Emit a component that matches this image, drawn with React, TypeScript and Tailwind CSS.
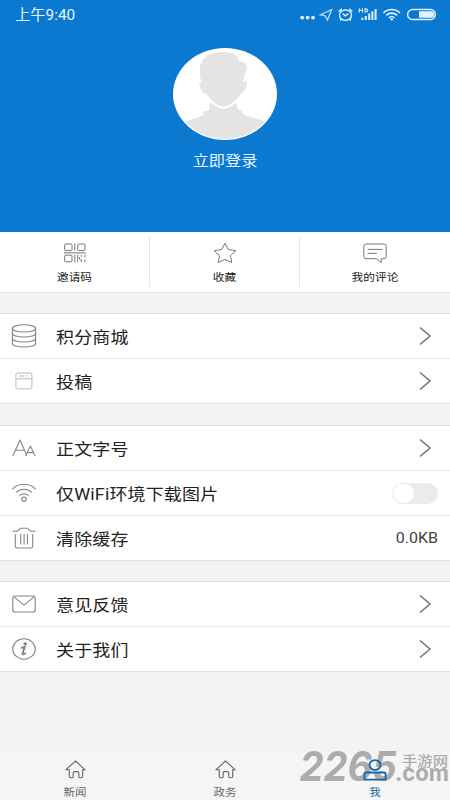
import React, { useState } from 'react';

type IconProps = { className?: string };

const QrIcon: React.FC<IconProps> = ({ className }) => (
  <svg viewBox="0 0 22 20" className={className} fill="none" stroke="currentColor">
    <rect x="0.7" y="1" width="7.3" height="6.6" rx="0.8" />
    <rect x="13.7" y="1" width="7.3" height="6.6" rx="0.8" />
    <rect x="0.7" y="12.2" width="7.3" height="6.6" rx="0.8" />
    <path d="M10.8 0.5v7.2M0 9.9h22M10.8 11.8v7.5M13.7 11.8v7.5M17.3 11.8v2M17.3 16v3.3M15.6 14v2.4M21 11.8v2.8M21 16.4v2.9" />
  </svg>
);

const StarIcon: React.FC<IconProps> = ({ className }) => (
  <svg viewBox="0 0 24 22" className={className} fill="none" stroke="currentColor" strokeLinejoin="round">
    <path d="M12 1.2l3.3 6.4 7.5 1.1-5.4 4.9 1.4 7-6.8-3.2-6.8 3.2 1.4-7-5.4-4.9 7.5-1.1z" />
  </svg>
);

const CommentIcon: React.FC<IconProps> = ({ className }) => (
  <svg viewBox="0 0 24 21" className={className} fill="none" stroke="currentColor" strokeLinejoin="round">
    <path d="M3 1h18a2.2 2.2 0 0 1 2.2 2.2v10.3a2.2 2.2 0 0 1-2.2 2.2h-2.8v4l-4.5-4H3a2.2 2.2 0 0 1-2.2-2.2V3.2A2.2 2.2 0 0 1 3 1zM4.6 6.4h15M4.6 10.4h9.2" />
  </svg>
);

const CoinsIcon: React.FC<IconProps> = ({ className }) => (
  <svg viewBox="0 0 26 24" className={className} fill="none" stroke="currentColor" strokeWidth="1.1">
    <ellipse cx="13" cy="4.4" rx="11.6" ry="3.6" />
    <path d="M1.4 4.4v15c0 2 5.2 3.6 11.6 3.6s11.6-1.6 11.6-3.6v-15M1.4 9.4c0 2 5.2 3.6 11.6 3.6s11.6-1.6 11.6-3.6M1.4 14.4c0 2 5.2 3.6 11.6 3.6s11.6-1.6 11.6-3.6" />
  </svg>
);

const DraftIcon: React.FC<IconProps> = ({ className }) => (
  <svg viewBox="0 0 18 18" className={className} fill="none" stroke="currentColor">
    <rect x="0.9" y="1" width="16" height="15.8" rx="2" />
    <path d="M1 6.8h16M4 4h5M10 4h1.2M12.6 3.2v1.4" />
  </svg>
);

const FontSizeIcon: React.FC<IconProps> = ({ className }) => (
  <svg viewBox="0 0 24 18" className={className} fill="none" stroke="currentColor" strokeWidth="1.1" strokeLinejoin="round">
    <path d="M0.8 17L8 1l6.8 15.6M3.4 11.2h9M13.6 17l4.8-10 4.7 10M15.3 13.6h6.2" />
  </svg>
);

const WifiIcon: React.FC<IconProps> = ({ className }) => (
  <svg viewBox="0 0 24 20" className={className} fill="none" stroke="currentColor" strokeWidth="1.1" strokeLinecap="round">
    <path d="M0.8 5.8c6-6 16.4-6 22.4 0M4.4 9.2c4.2-4 11-4 15.2 0M8 12.4c2.2-2.1 5.8-2.1 8 0" />
    <circle cx="12" cy="16.2" r="2.2" />
  </svg>
);

const TrashIcon: React.FC<IconProps> = ({ className }) => (
  <svg viewBox="0 0 24 22" className={className} fill="none" stroke="currentColor" strokeWidth="1.1" strokeLinejoin="round">
    <path d="M0.5 4.2h5l3-3h7l3 3h5M3.3 7v12.2a1.8 1.8 0 0 0 1.8 1.8h13.8a1.8 1.8 0 0 0 1.8-1.8V7M8.7 7v10.5M12.1 7v10.5M15.4 7v10.5" />
  </svg>
);

const MailIcon: React.FC<IconProps> = ({ className }) => (
  <svg viewBox="0 0 24 18" className={className} fill="none" stroke="currentColor" strokeWidth="1.1" strokeLinejoin="round">
    <rect x="0.8" y="1" width="22.4" height="16" rx="2" />
    <path d="M1.8 1.6L12 10.2 22.2 1.6" />
  </svg>
);

const InfoIcon: React.FC<IconProps> = ({ className }) => (
  <svg viewBox="0 0 24 22" className={className} fill="none" stroke="currentColor" strokeWidth="1.1">
    <ellipse cx="12" cy="11" rx="11.3" ry="10.2" />
    <ellipse cx="13.2" cy="5.8" rx="1.8" ry="1.5" fill="currentColor" stroke="none" />
    <path d="M8.8 9.7c1.5 0 2.8-.3 3.9-.8l-2 6.4c-.4 1.6 1 1.5 3.2-.4" strokeWidth="1.9" />
  </svg>
);

const HomeIcon: React.FC<IconProps> = ({ className }) => (
  <svg viewBox="0 0 21 19" className={className} fill="none" stroke="currentColor" strokeWidth="1.1" strokeLinejoin="round">
    <path d="M0.8 9.8L10.5 1l9.7 8.8h-2.5v6.4c0 1-.5 1.6-1.5 1.6h-1c-.9 0-1.4-.5-1.4-1.4v-3.6c0-.8-.5-1.2-1.2-1.2H9.4c-.8 0-1.2.4-1.2 1.2v3.6c0 .9-.5 1.4-1.4 1.4h-1c-1 0-1.5-.6-1.5-1.6V9.8z" />
  </svg>
);

const UserIcon: React.FC<IconProps> = ({ className }) => (
  <svg viewBox="0 0 24 22" className={className} fill="none" stroke="currentColor" strokeWidth="1.8">
    <ellipse cx="12" cy="6" rx="5.5" ry="4.9" />
    <path d="M3 13.5h18a1.6 1.6 0 0 1 1.6 1.6v5.6H1.4v-5.6A1.6 1.6 0 0 1 3 13.5z" />
  </svg>
);

const Chevron: React.FC = () => (
  <svg viewBox="0 0 14 20" className="h-5 w-3.5 text-[#777]" fill="none" stroke="currentColor" strokeWidth="1.6">
    <path d="M2 1.5L12 10 2 18.5" />
  </svg>
);

const StatusIcons: React.FC = () => (
  <svg viewBox="0 0 142 20" className="h-5 w-[142px]" fill="none" stroke="#dff3ff" strokeWidth="1.4">
    <g fill="#dff3ff" stroke="none">
      <circle cx="2.2" cy="12.6" r="1.9" />
      <circle cx="7.6" cy="12.6" r="1.9" />
      <circle cx="13" cy="12.6" r="1.9" />
      <path d="M61.4 15v-2.2h2V15zM64.8 15v-4h2v4zM68.2 15V8.4h2V15zM71.4 15V6.2h2V15zM74.6 15V4h2v11z" />
    </g>
    <path d="M31.6 4.6L20.4 9.7l4.8 1.2 2.3 4.2z" stroke="#a9d6f6" />
    <ellipse cx="45.5" cy="10.2" rx="6" ry="5.2" />
    <path d="M42.7 8.6l2.8 2.2 2.8-2.2M38.7 6.6l3.2-2.7M52.3 6.6l-3.2-2.7M41.4 14.3l-1.3 1.2M49.6 14.3l1.3 1.2" />
    <path d="M59.3 3.4v4M62.5 3.4v4M59.3 5.3h3.2M65 3.9v3h1c2.3 0 2.3-3 0-3z" strokeWidth="1.1" />
    <path d="M83.4 8c4.6-4.6 12-4.6 16.6 0M86.2 10.4c3-3 8-3 11 0M88.9 12.8c1.6-1.5 4-1.5 5.6 0" strokeWidth="1.6" />
    <circle cx="91.7" cy="14.3" r="1.3" fill="#dff3ff" stroke="none" />
    <rect x="107.6" y="4.5" width="27.8" height="10" rx="5" />
    <path d="M119 6.3h12a3.2 3.2 0 0 1 0 6.4h-12z" fill="#dff3ff" stroke="none" />
  </svg>
);

const Avatar: React.FC = () => (
  <svg viewBox="0 0 104 92" className="h-[92px] w-[104px]">
    <defs>
      <clipPath id="avatarClip">
        <ellipse cx="52" cy="46" rx="50.5" ry="44.8" />
      </clipPath>
    </defs>
    <ellipse cx="52" cy="46" rx="52" ry="46" fill="#fff" />
    <g clipPath="url(#avatarClip)" fill="#e4e4e4">
      <path d="M5 76l8-3c6-2 12-3 17.3-6-.5-2 0-3 1-4 3 .5 5.500-1 5-4.300-.6-1.500-.5-2.500.7-3.400h26c1.200.9 1.500 2.500.8 3.700.5 1.500 1.500 2.700 3.200 3 2 .6 3 2 3.300 4.300 6 3 14 4.500 20.700 6.700l8 3v20H5z" />
      <path
        d="M27 33C24 20 26 13 32 8.5 39 2 56 1 63.7 6.3c2.3 1.700 3.300 4 3.300 6.200 5 0 8 2.500 7.800 8.500 0 4.500-3.300 6-3.500 11.500 3-1 4.200 0 3.700 2.500-.7 4-1.500 8-4 9.500-1.500 1-2.500 1.500-4 4.200C63 54 56 59.500 50.300 59.700 44 59.500 37.500 53 33.700 47.500c-1-1-3.500-1-5-2.700-2-3.500-3.400-6.800-3.400-10.800 0-1.200.8-1.500 1.700-1z"
        stroke="#fff"
        strokeWidth="2"
      />
    </g>
  </svg>
);

const Watermark: React.FC = () => (
  <svg viewBox="0 0 150 52" className="absolute right-0 bottom-0.5 h-[52px] w-[150px] overflow-visible" fill="#acacac">
    <text x="-0.5" y="35" fontFamily="Inter" fontStyle="italic" fontWeight="700" fontSize="41" textLength="97" lengthAdjust="spacingAndGlyphs">
      2265
    </text>
    <text x="95" y="35" fontFamily="Inter" fontWeight="700" fontSize="23" textLength="54" lengthAdjust="spacingAndGlyphs">
      .com
    </text>
    <text x="102" y="19.5" fontFamily="Noto Sans CJK SC" fontWeight="500" fontSize="13.5" textLength="46" lengthAdjust="spacingAndGlyphs">
      手游网
    </text>
  </svg>
);

interface RowProps {
  icon: React.ReactNode;
  label: string;
  children?: React.ReactNode;
}

const Row: React.FC<RowProps> = ({ icon, label, children = <Chevron /> }) => (
  <div className="flex h-[45px] items-center pr-[18px] last:h-11">
    <div className="flex w-12 shrink-0 justify-center text-[#858585]">{icon}</div>
    <span className="ml-2 flex-1 scale-y-90 pt-[3px] text-[18px] leading-none tracking-[0.15px] text-[#222]">{label}</span>
    {children}
  </div>
);

const Section: React.FC<{ children: React.ReactNode }> = ({ children }) => (
  <div className="mb-5 divide-y divide-[#e9e9e9] border-y border-[#e0e0e0] bg-white first-of-type:mb-[21px]">{children}</div>
);

const actions = [
  { label: '邀请码', icon: <QrIcon className="h-5 w-[22px]" /> },
  { label: '收藏', icon: <StarIcon className="h-[22px] w-6" /> },
  { label: '我的评论', icon: <CommentIcon className="h-[21px] w-6" /> },
];

const App: React.FC = () => {
  const [wifiOnly, setWifiOnly] = useState(false);

  return (
    <div className="relative flex h-[800px] w-[450px] flex-col overflow-hidden bg-[#f3f3f3] font-['Roboto','Noto_Sans_CJK_SC',sans-serif]">
      <header className="h-[232px] shrink-0 bg-[#0b79d0] text-[#e6f6ff]">
        <div className="flex h-[29px] items-center justify-between pr-[8px] pl-[15px]">
          <span className="scale-y-95 pt-0.5 text-[15.3px] leading-none">上午9:40</span>
          <StatusIcons />
        </div>
        <div className="mt-[19px] flex flex-col items-center">
          <Avatar />
          <span className="mt-[13px] scale-y-90 text-[16.2px] leading-none">立即登录</span>
        </div>
      </header>

      <nav className="mb-5 grid h-[61px] shrink-0 grid-cols-3 border-b border-[#e2e2e2] bg-white py-[5px]">
        {actions.map((action) => (
          <button
            key={action.label}
            className="flex flex-col items-center border-r border-[#e5e5e5] text-[#777] last:border-r-0"
          >
            <span className="mt-[5px] flex h-[22px] items-center">{action.icon}</span>
            <span className="mt-2 scale-y-90 text-[11.7px] leading-none text-[#222]">{action.label}</span>
          </button>
        ))}
      </nav>

      <Section>
        <Row icon={<CoinsIcon className="h-6 w-[26px]" />} label="积分商城" />
        <Row icon={<DraftIcon className="h-[18px] w-[18px] text-[#bbb]" />} label="投稿" />
      </Section>

      <Section>
        <Row icon={<FontSizeIcon className="h-[18px] w-6" />} label="正文字号" />
        <Row icon={<WifiIcon className="h-5 w-6" />} label="仅WiFi环境下载图片">
          <button
            onClick={() => setWifiOnly(!wifiOnly)}
            className={`mr-[-6px] flex h-[21px] w-[46px] items-center rounded-full p-px ${wifiOnly ? 'justify-end bg-[#0b79d0]' : 'bg-[#ebebeb]'}`}
          >
            <span className="h-[19px] w-[21px] rounded-full bg-white" />
          </button>
        </Row>
        <Row icon={<TrashIcon className="h-[22px] w-6" />} label="清除缓存">
          <span className="mr-[-6px] scale-y-90 pt-0.5 text-[16px] leading-none text-[#444]">0.0KB</span>
        </Row>
      </Section>

      <Section>
        <Row icon={<MailIcon className="h-[18px] w-6" />} label="意见反馈" />
        <Row icon={<InfoIcon className="h-[22px] w-6" />} label="关于我们" />
      </Section>

      <nav className="relative mt-auto grid h-12 shrink-0 grid-cols-3 bg-[#f5f5f5] text-[11.5px] leading-none text-[#666]">
        <Watermark />
        <div className="flex flex-col items-center">
          <HomeIcon className="mt-2 h-[19px] w-[21px]" />
          <span className="mt-2 scale-y-90">新闻</span>
        </div>
        <div className="flex flex-col items-center">
          <HomeIcon className="mt-2 h-[19px] w-[21px]" />
          <span className="mt-2 scale-y-90">政务</span>
        </div>
        <div className="relative flex flex-col items-center text-[#1765a5]">
          <UserIcon className="mt-[7px] h-[22px] w-6" />
          <span className="mt-1.5 scale-y-90">我</span>
        </div>
      </nav>
    </div>
  );
};

export default App;
